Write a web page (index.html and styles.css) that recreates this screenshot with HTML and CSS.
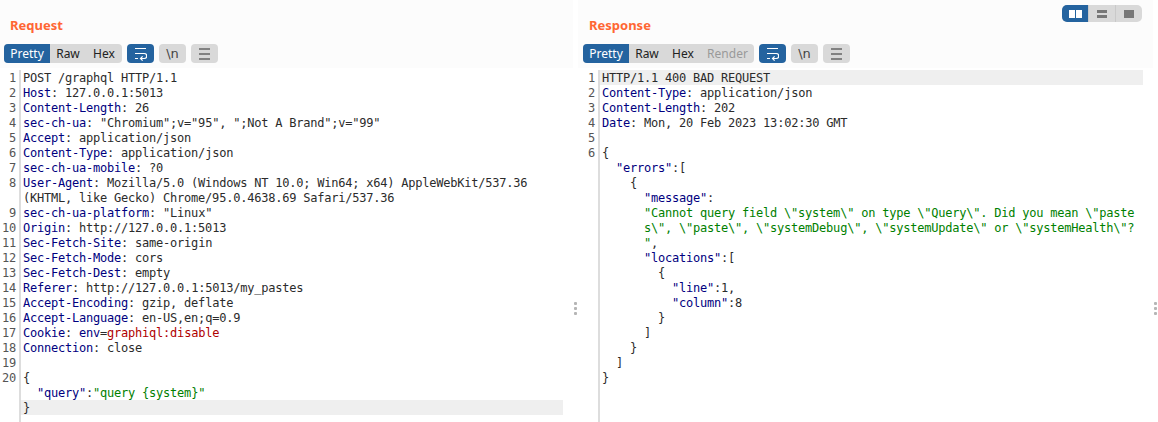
FILE: index.html
```html
<!DOCTYPE html>
<html lang="en">
<head>
<meta charset="utf-8">
<title>Request / Response</title>
<link rel="stylesheet" href="styles.css">
</head>
<body>
<main class="split">
  <section class="pane pane-left">
    <header class="pane-head">
      <h2 class="title">Request</h2>
      <div class="tools">
        <div class="seg"><span class="tab on">Pretty</span><span class="tab">Raw</span><span class="tab">Hex</span></div>
        <button class="tbtn on"><svg width="13" height="14" viewBox="0 0 13 14"><path d="M1 1.5h11M1 6.5h9.2a2.5 2.5 0 0 1 0 5H6.5M8.6 9.4l-2.1 2.1 2.1 2.1M1 11.5h3" fill="none" stroke="#fff" stroke-width="1.2"/></svg></button>
        <button class="tbtn mono">\n</button>
        <button class="tbtn"><svg width="13" height="12" viewBox="0 0 13 12"><path d="M1 1h11M1 6h11M1 11h11" stroke="#666" stroke-width="1.5"/></svg></button>
      </div>
    </header>
    <div class="code">
      <div class="row"><i>1</i><p>POST /graphql HTTP/1.1</p></div>
      <div class="row"><i>2</i><p><b>Host</b>: 127.0.0.1:5013</p></div>
      <div class="row"><i>3</i><p><b>Content-Length</b>: 26</p></div>
      <div class="row"><i>4</i><p><b>sec-ch-ua</b>: "Chromium";v="95", ";Not A Brand";v="99"</p></div>
      <div class="row"><i>5</i><p><b>Accept</b>: application/json</p></div>
      <div class="row"><i>6</i><p><b>Content-Type</b>: application/json</p></div>
      <div class="row"><i>7</i><p><b>sec-ch-ua-mobile</b>: ?0</p></div>
      <div class="row"><i>8</i><p><b>User-Agent</b>: Mozilla/5.0 (Windows NT 10.0; Win64; x64) AppleWebKit/537.36 (KHTML, like Gecko) Chrome/95.0.4638.69 Safari/537.36</p></div>
      <div class="row"><i>9</i><p><b>sec-ch-ua-platform</b>: "Linux"</p></div>
      <div class="row"><i>10</i><p><b>Origin</b>: http://127.0.0.1:5013</p></div>
      <div class="row"><i>11</i><p><b>Sec-Fetch-Site</b>: same-origin</p></div>
      <div class="row"><i>12</i><p><b>Sec-Fetch-Mode</b>: cors</p></div>
      <div class="row"><i>13</i><p><b>Sec-Fetch-Dest</b>: empty</p></div>
      <div class="row"><i>14</i><p><b>Referer</b>: http://127.0.0.1:5013/my_pastes</p></div>
      <div class="row"><i>15</i><p><b>Accept-Encoding</b>: gzip, deflate</p></div>
      <div class="row"><i>16</i><p><b>Accept-Language</b>: en-US,en;q=0.9</p></div>
      <div class="row"><i>17</i><p><b>Cookie</b>: <b>env</b>=<u>graphiql:disable</u></p></div>
      <div class="row"><i>18</i><p><b>Connection</b>: close</p></div>
      <div class="row"><i>19</i><p>&nbsp;</p></div>
      <div class="row"><i>20</i><p>{</p></div>
      <div class="row"><i></i><p class="in1"><b>"query"</b>:<s>"query {system}"</s></p></div>
      <div class="row hl"><i></i><p>}</p></div>
      <div class="row fill"><i></i></div>
    </div>
  </section>
  <div class="grip"><span></span><span></span><span></span></div>
  <section class="pane pane-right">
    <header class="pane-head">
      <h2 class="title">Response</h2>
      <div class="tools">
        <div class="seg"><span class="tab on">Pretty</span><span class="tab">Raw</span><span class="tab">Hex</span><span class="tab off">Render</span></div>
        <button class="tbtn on"><svg width="13" height="14" viewBox="0 0 13 14"><path d="M1 1.5h11M1 6.5h9.2a2.5 2.5 0 0 1 0 5H6.5M8.6 9.4l-2.1 2.1 2.1 2.1M1 11.5h3" fill="none" stroke="#fff" stroke-width="1.2"/></svg></button>
        <button class="tbtn mono">\n</button>
        <button class="tbtn"><svg width="13" height="12" viewBox="0 0 13 12"><path d="M1 1h11M1 6h11M1 11h11" stroke="#666" stroke-width="1.5"/></svg></button>
      </div>
      <div class="layout">
        <span class="lbtn on"><svg width="13" height="8" viewBox="0 0 13 8"><path d="M0 0h6v8H0zM7 0h6v8H7z" fill="#fff"/></svg></span>
        <span class="lbtn"><svg width="10" height="8" viewBox="0 0 10 8"><path d="M0 0h10v3H0zM0 5h10v3H0z" fill="#777"/></svg></span>
        <span class="lbtn"><svg width="10" height="8" viewBox="0 0 10 8"><path d="M0 0h10v8H0z" fill="#777"/></svg></span>
      </div>
    </header>
    <div class="code">
      <div class="row hl"><i>1</i><p>HTTP/1.1 400 BAD REQUEST</p></div>
      <div class="row"><i>2</i><p><b>Content-Type</b>: application/json</p></div>
      <div class="row"><i>3</i><p><b>Content-Length</b>: 202</p></div>
      <div class="row"><i>4</i><p><b>Date</b>: Mon, 20 Feb 2023 13:02:30 GMT</p></div>
      <div class="row"><i>5</i><p>&nbsp;</p></div>
      <div class="row"><i>6</i><p>{</p></div>
      <div class="row"><i></i><p class="in1"><b>"errors"</b>:[</p></div>
      <div class="row"><i></i><p class="in2">{</p></div>
      <div class="row"><i></i><p class="in3"><b>"message"</b>:</p></div>
      <div class="row"><i></i><p class="in3"><s>"Cannot query field \"system\" on type \"Query\". Did you mean \"paste<br>s\", \"paste\", \"systemDebug\", \"systemUpdate\" or \"systemHealth\"?<br>"</s>,</p></div>
      <div class="row"><i></i><p class="in3"><b>"locations"</b>:[</p></div>
      <div class="row"><i></i><p class="in4">{</p></div>
      <div class="row"><i></i><p class="in5"><b>"line"</b>:1,</p></div>
      <div class="row"><i></i><p class="in5"><b>"column"</b>:8</p></div>
      <div class="row"><i></i><p class="in4">}</p></div>
      <div class="row"><i></i><p class="in3">]</p></div>
      <div class="row"><i></i><p class="in2">}</p></div>
      <div class="row"><i></i><p class="in1">]</p></div>
      <div class="row"><i></i><p>}</p></div>
      <div class="row fill"><i></i></div>
    </div>
  </section>
  <div class="grip"><span></span><span></span><span></span></div>
</main>
</body>
</html>
```
FILE: styles.css
```css
* { box-sizing: border-box; }
html, body { margin: 0; height: 100%; background: #fff; overflow: hidden; }
.split { display: flex; height: 422px; }
.pane { display: flex; flex-direction: column; min-width: 0; }
.pane-left { width: 573px; }
.pane-right { width: 575px; }
.grip { width: 5px; display: flex; flex-direction: column; align-items: center; justify-content: center; gap: 2px; padding-top: 195px; }
.grip span { width: 3px; height: 3px; background: #b5b5b5; border-radius: 1px; }
.pane-head { position: relative; height: 68px; background: #fcfcfc; padding: 0 4px; flex: none; }
.pane-right .pane-head { padding-left: 5px; }
.title { margin: 0; padding: 16px 0 0 6px; height: 44px; font: bold 13px/18px "Noto Sans", sans-serif; color: #ff6633; }
.tools { display: flex; gap: 5px; height: 19px; }
.seg { display: flex; background: #d9d9d9; border-radius: 4px; overflow: hidden; height: 19px; }
.tab { width: 36px; text-align: center; font: 12px/19px "Noto Sans", sans-serif; color: #222; }
.tab.on { background: #24639f; color: #fff; width: 46px; }
.tab.off { color: #999; width: 53px; }
.tbtn { width: 27px; height: 19px; padding: 0; border: 0; border-radius: 4px; background: #d9d9d9; display: flex; align-items: center; justify-content: center; color: #444; }
.tbtn.on { background: #24639f; }
.tbtn.mono { font: 13px/19px "DejaVu Sans", sans-serif; }
.layout { position: absolute; top: 5px; right: 11px; width: 80px; height: 17px; display: flex; background: #d9d9d9; border-radius: 5px; overflow: hidden; }
.lbtn { flex: 1; display: flex; align-items: center; justify-content: center; border-left: 1px solid #c9c9c9; }
.lbtn.on { background: #24639f; border-left: 0; }
.code { flex: 1; padding: 2px 10px 0 0; background: #fff; display: flex; flex-direction: column; font: 12px/15px "DejaVu Sans Mono", monospace; letter-spacing: -0.22px; color: #2b2b2b; }
.row { display: flex; }
.row i { flex: none; width: 21px; padding: 1px 3px 0 0; margin-bottom: -1px; border-right: 2px solid #ddd; text-align: right; font-style: normal; color: #555; }
.pane-right .row i { width: 22px; }
.row p { margin: 0 0 -1px; flex: 1; min-width: 0; padding: 1px 0 0 2px; white-space: pre-wrap; }
.hl p { background: linear-gradient(#efefef, #efefef) top / 100% 15px no-repeat; }
.fill { flex: 1; }
.row b { font-weight: normal; color: #000080; }
.row s { text-decoration: none; color: #008000; }
.row u { text-decoration: none; color: #b00000; }
.row .in1 { padding-left: 16px; }
.row .in2 { padding-left: 30px; }
.row .in3 { padding-left: 44px; }
.row .in4 { padding-left: 58px; }
.row .in5 { padding-left: 72px; }
```
